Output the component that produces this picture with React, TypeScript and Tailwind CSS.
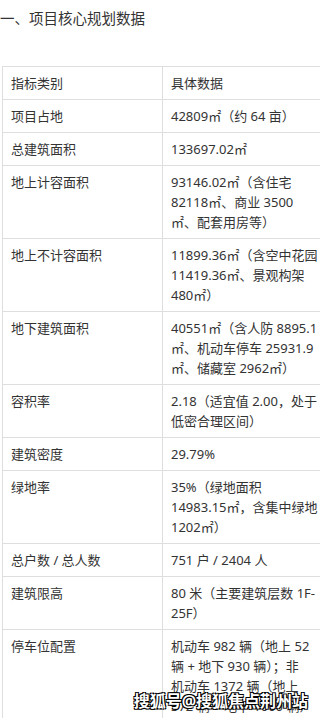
import type { ReactNode } from 'react';

const ROWS: [string, ReactNode][] = [
  ['项目占地', '42809㎡（约 64 亩）'],
  ['总建筑面积', '133697.02㎡'],
  ['地上计容面积', '93146.02㎡（含住宅 82118㎡、商业 3500 ㎡、配套用房等）'],
  ['地上不计容面积', '11899.36㎡（含空中花园 11419.36㎡、景观构架 480㎡）'],
  ['地下建筑面积', '40551㎡（含人防 8895.1 ㎡、机动车停车 25931.9 ㎡、储藏室 2962㎡）'],
  ['容积率', '2.18（适宜值 2.00，处于低密合理区间）'],
  ['建筑密度', '29.79%'],
  ['绿地率', '35%（绿地面积 14983.15㎡，含集中绿地 1202㎡）'],
  ['总户数 / 总人数', '751 户 / 2404 人'],
  ['建筑限高', '80 米（主要建筑层数 1F-25F）'],
  [
    '停车位配置',
    <>
      机动车 982 辆（地上 52 辆 + 地下 930 辆）；非<span className="whitespace-nowrap">机动车</span> 1372 辆（地上 372 辆 + 地下 1000 辆）
    </>,
  ],
];

export default function App() {
  return (
    <div className="relative h-[718px] w-[320px] overflow-hidden bg-white font-['Noto_Sans','Noto_Sans_CJK_SC',sans-serif] text-[#333]">
      <p className="pt-[7px] text-[14.5px] leading-[22px]">一、项目核心规划数据</p>

      <table className="ml-[2px] mt-[37px] w-[326px] table-fixed border-collapse text-[13px] leading-[20px]">
        <colgroup>
          <col className="w-[160px]" />
          <col />
        </colgroup>
        <tbody>
          <tr>
            <td className="border border-[#dedede] px-[8px] py-[6px] align-top">指标类别</td>
            <td className="border border-[#dedede] px-[8px] py-[6px] align-top">具体数据</td>
          </tr>
          {ROWS.map(([label, value]) => (
            <tr key={label}>
              <td className="border border-[#dedede] px-[8px] py-[6px] align-top">{label}</td>
              <td className="border border-[#dedede] px-[8px] py-[6px] align-top">{value}</td>
            </tr>
          ))}
        </tbody>
      </table>

      {/* 水印 */}
      <div className="absolute bottom-[8px] right-[12px] text-[16px] font-bold leading-[18px] text-white [text-shadow:1px_1px_0_#000,-1px_-1px_0_#000,1px_-1px_0_#000,-1px_1px_0_#000]">
        搜狐号@搜狐焦点荆州站
      </div>
    </div>
  );
}
